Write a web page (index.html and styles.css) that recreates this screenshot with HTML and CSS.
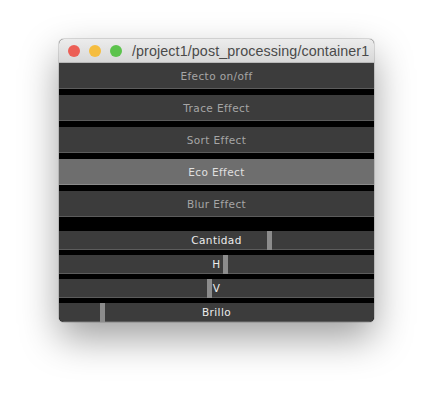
FILE: index.html
```html
<!DOCTYPE html>
<html>
<head>
<meta charset="utf-8">
<link rel="stylesheet" href="styles.css">
</head>
<body>
<div class="window">
  <div class="titlebar">
    <div class="lights">
      <span class="light red"></span>
      <span class="light yellow"></span>
      <span class="light green"></span>
    </div>
    <div class="title">/project1/post_processing/container1</div>
  </div>
  <div class="body">
    <div class="buttons">
      <div class="btn">Efecto on/off</div>
      <div class="btn">Trace Effect</div>
      <div class="btn">Sort Effect</div>
      <div class="btn active">Eco Effect</div>
      <div class="btn">Blur Effect</div>
    </div>
    <div class="sliders">
      <div class="slider"><span class="label">Cantidad</span><span class="handle" style="left:66%"></span></div>
      <div class="slider"><span class="label">H</span><span class="handle" style="left:52.1%"></span></div>
      <div class="slider"><span class="label">V</span><span class="handle" style="left:47%"></span></div>
      <div class="slider"><span class="label">Brillo</span><span class="handle" style="left:13%"></span></div>
    </div>
  </div>
</div>
</body>
</html>
```

FILE: styles.css
```css
html, body {
  margin: 0;
  padding: 0;
  background: #ffffff;
}
body {
  width: 433px;
  height: 400px;
  padding-top: 39px;
  box-sizing: border-box;
  font-family: "Liberation Sans", Arial, sans-serif;
}
.window {
  width: 315px;
  margin: 0 auto;
  border-radius: 5px;
  overflow: hidden;
  background: #000;
  box-shadow: 0 0 0 1px rgba(0,0,0,0.12), 0 16px 38px rgba(0,0,0,0.38);
}
.titlebar {
  height: 24px;
  display: flex;
  align-items: center;
  background: linear-gradient(#ececec, #d8d8d8);
  border-bottom: 1px solid #b8b8b8;
  box-sizing: border-box;
}
.lights {
  display: flex;
  gap: 9px;
  padding-left: 9px;
}
.light {
  width: 12px;
  height: 12px;
  border-radius: 50%;
  display: block;
}
.red { background: #ec5f56; }
.yellow { background: #f5bd3f; }
.green { background: #5cc34c; }
.title {
  margin-left: 10px;
  font-size: 14.3px;
  color: #4a4a4a;
  white-space: nowrap;
  letter-spacing: 0.1px;
  padding-top: 1px;
}
.body {
  display: flex;
  flex-direction: column;
  gap: 14px;
  background: #000;
}
.buttons {
  display: flex;
  flex-direction: column;
  gap: 6px;
}
.btn {
  height: 26px;
  box-sizing: border-box;
  background: #3c3c3c;
  border-bottom: 1px solid #5c5c5c;
  display: flex;
  align-items: center;
  justify-content: center;
  font-family: "DejaVu Sans", sans-serif;
  font-size: 10.5px;
  letter-spacing: 0.4px;
  color: #a6a6a6;
}
.btn.active {
  background: #6e6e6e;
  border-bottom-color: #8a8a8a;
  color: #e0e0e0;
}
.sliders {
  display: flex;
  flex-direction: column;
  gap: 5px;
}
.slider {
  position: relative;
  height: 19px;
  box-sizing: border-box;
  background: #3c3c3c;
  border-bottom: 1px solid #5c5c5c;
  display: flex;
  align-items: center;
  justify-content: center;
  font-family: "DejaVu Sans", sans-serif;
  font-size: 10.5px;
  letter-spacing: 0.4px;
  color: #ececec;
}
.handle {
  position: absolute;
  top: 0;
  bottom: -1px;
  width: 5px;
  background: #8c8c8c;
}
```
